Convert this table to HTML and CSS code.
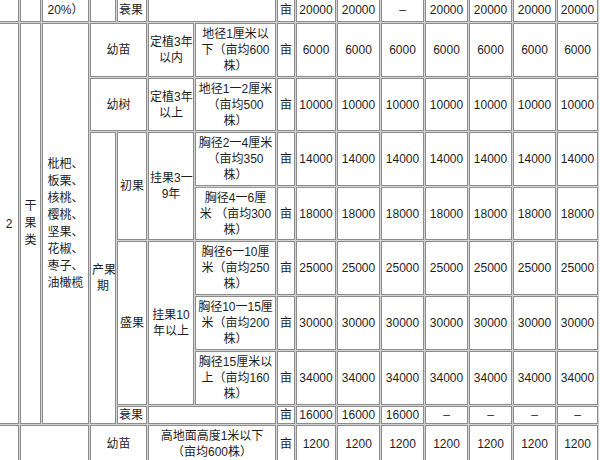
FILE: index.html
```html
<!DOCTYPE html>
<html lang="zh-CN">
<head>
<meta charset="utf-8">
<title>苗木补偿标准</title>
<link rel="stylesheet" href="styles.css">
</head>
<body>
<table class="grid">
  <colgroup>
    <col class="c-a"><col class="c-b"><col class="c-c"><col class="c-d"><col class="c-e"><col class="c-f"><col class="c-g"><col class="c-h">
    <col class="c-v1"><col class="c-v2"><col class="c-v3"><col class="c-v4"><col class="c-v5"><col class="c-v6"><col class="c-v7">
  </colgroup>
  <tbody>
    <tr class="r0">
      <td></td><td></td><td>20%）</td><td></td>
      <td class="left">衰果</td><td colspan="2"></td><td>亩</td>
      <td>20000</td><td>20000</td><td class="dash">–</td><td>20000</td><td>20000</td><td>20000</td><td>20000</td>
    </tr>
    <tr class="r54">
      <td rowspan="8">2</td>
      <td rowspan="8" class="tall">干<br>果<br>类</td>
      <td rowspan="8" class="tall">枇杷、<br>板栗、<br>核桃、<br>樱桃、<br>坚果、<br>花椒、<br>枣子、<br>油橄榄</td>
      <td colspan="2">幼苗</td>
      <td>定植3年<br>以内</td>
      <td>地径1厘米以<br>下（亩均600<br>株）</td>
      <td>亩</td>
      <td>6000</td><td>6000</td><td>6000</td><td>6000</td><td>6000</td><td>6000</td><td>6000</td>
    </tr>
    <tr class="r53">
      <td colspan="2">幼树</td>
      <td>定植3年<br>以上</td>
      <td>地径1一2厘米<br>（亩均500<br>株）</td>
      <td>亩</td>
      <td>10000</td><td>10000</td><td>10000</td><td>10000</td><td>10000</td><td>10000</td><td>10000</td>
    </tr>
    <tr class="r54">
      <td rowspan="6">产果<br>期</td>
      <td rowspan="2">初果</td>
      <td rowspan="2">挂果3一<br>9年</td>
      <td>胸径2一4厘米<br>（亩均350<br>株）</td>
      <td>亩</td>
      <td>14000</td><td>14000</td><td>14000</td><td>14000</td><td>14000</td><td>14000</td><td>14000</td>
    </tr>
    <tr class="r53 strong">
      <td>胸径4一6厘<br>米 （亩均300<br>株）</td>
      <td>亩</td>
      <td>18000</td><td>18000</td><td>18000</td><td>18000</td><td>18000</td><td>18000</td><td>18000</td>
    </tr>
    <tr class="r54">
      <td rowspan="3">盛果</td>
      <td rowspan="3">挂果10<br>年以上</td>
      <td>胸径6一10厘<br>米（亩均250<br>株）</td>
      <td>亩</td>
      <td>25000</td><td>25000</td><td>25000</td><td>25000</td><td>25000</td><td>25000</td><td>25000</td>
    </tr>
    <tr class="r54">
      <td>胸径10一15厘<br>米（亩均200<br>株）</td>
      <td>亩</td>
      <td>30000</td><td>30000</td><td>30000</td><td>30000</td><td>30000</td><td>30000</td><td>30000</td>
    </tr>
    <tr class="r54">
      <td>胸径15厘米以<br>上（亩均160<br>株）</td>
      <td>亩</td>
      <td>34000</td><td>34000</td><td>34000</td><td>34000</td><td>34000</td><td>34000</td><td>34000</td>
    </tr>
    <tr class="r18">
      <td class="left">衰果</td>
      <td colspan="2"></td>
      <td>亩</td>
      <td>16000</td><td>16000</td><td>16000</td><td class="dash">–</td><td class="dash">–</td><td class="dash">–</td><td class="dash">–</td>
    </tr>
    <tr class="r37">
      <td></td>
      <td colspan="2"></td>
      <td colspan="2">幼苗</td>
      <td colspan="2">高地面高度1米以下<br>（亩均600株）</td>
      <td>亩</td>
      <td>1200</td><td>1200</td><td>1200</td><td>1200</td><td>1200</td><td>1200</td><td>1200</td>
    </tr>
  </tbody>
</table>
</body>
</html>
```

FILE: styles.css
```css
html, body {
  margin: 0;
  padding: 0;
  overflow: hidden;
  background: #fbfbf8;
}

.grid {
  border-collapse: separate;
  border-spacing: 1px;
  table-layout: fixed;
  width: 601px;
  margin: -3px 0 0 -2px;
  background: #d4d4d4;
  font-family: "Liberation Sans", "Noto Sans CJK SC", sans-serif;
  font-size: 12px;
  line-height: 16px;
  color: #1e1e1e;
}

.grid td {
  border: 1px solid #8c8c8c;
  background: #fff;
  padding: 0 1px;
  text-align: center;
  vertical-align: middle;
  white-space: nowrap;
  overflow: hidden;
}

.grid td.tall {
  line-height: 17px;
}

.grid td.left {
  text-align: left;
}

.grid td.dash {
  color: #333;
}

.grid .strong td {
  border-top-color: #9a9a9a;
}

.c-a { width: 20px; }
.c-b { width: 21px; }
.c-c { width: 47px; }
.c-d { width: 26px; }
.c-e { width: 30px; }
.c-f { width: 46px; }
.c-g { width: 81px; }
.c-h { width: 18px; }
.c-v1 { width: 40px; }
.c-v2 { width: 43px; }
.c-v3 { width: 43px; }
.c-v4 { width: 43px; }
.c-v5 { width: 43px; }
.c-v6 { width: 43px; }
.c-v7 { width: 41px; }

.r0 { height: 24px; }
.r54 { height: 54px; }
.r53 { height: 53px; }
.r18 { height: 18px; }
.r37 { height: 37px; }
```
